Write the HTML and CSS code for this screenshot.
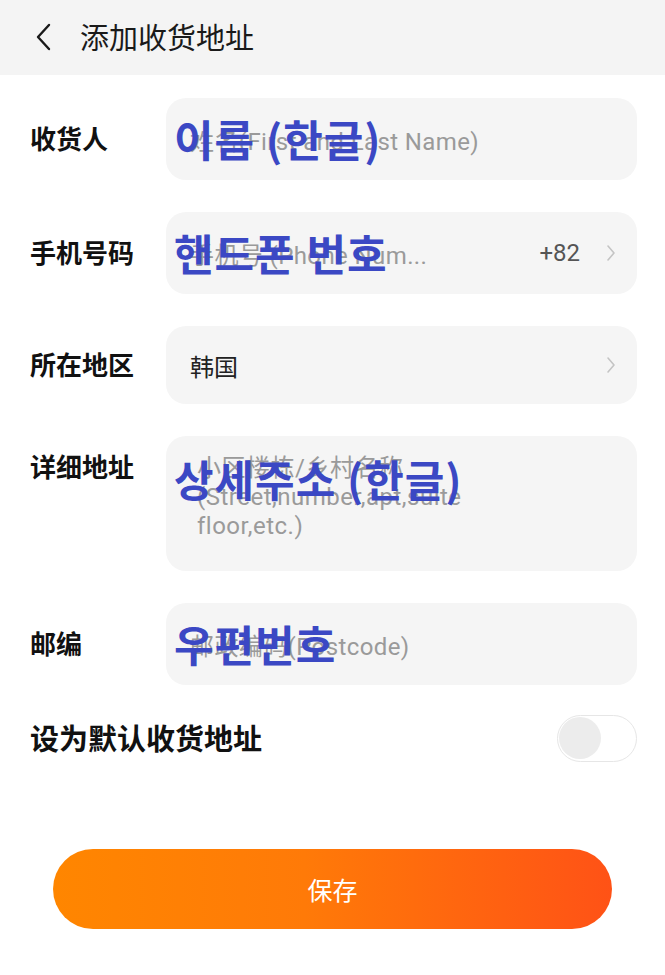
FILE: index.html
```html
<!DOCTYPE html>
<html lang="zh-CN">
<head>
  <meta charset="UTF-8">
  <title>添加收货地址</title>
  <link rel="stylesheet" href="styles.css">
</head>
<body>

  <!-- Header -->
  <div class="header">
    <svg class="back-icon" width="20" height="30" viewBox="0 0 20 30">
      <polyline points="15,3 4,15 15,27" fill="none" stroke="#1a1a1a" stroke-width="2.4" stroke-linecap="round" stroke-linejoin="round"/>
    </svg>
    <div class="header-title">添加收货地址</div>
  </div>

  <!-- Form -->
  <div class="form">
    <div class="row">
      <div class="label">收货人</div>
      <div class="field">
        <span class="placeholder">姓名(First and Last Name)</span>
        <span class="note">이름 (한글)</span>
      </div>
    </div>

    <div class="row">
      <div class="label">手机号码</div>
      <div class="field">
        <span class="placeholder grow">手机号 (Phone Num...</span>
        <span class="code">+82</span>
        <svg class="chevron" width="10" height="18" viewBox="0 0 10 18">
          <polyline points="2,2 8,9 2,16" fill="none" stroke="#c4c4c4" stroke-width="1.6" stroke-linecap="round" stroke-linejoin="round"/>
        </svg>
        <span class="note">핸드폰 번호</span>
      </div>
    </div>

    <div class="row">
      <div class="label">所在地区</div>
      <div class="field field-short">
        <span class="value grow">韩国</span>
        <svg class="chevron" width="10" height="18" viewBox="0 0 10 18">
          <polyline points="2,2 8,9 2,16" fill="none" stroke="#c4c4c4" stroke-width="1.6" stroke-linecap="round" stroke-linejoin="round"/>
        </svg>
      </div>
    </div>

    <div class="row row-top">
      <div class="label">详细地址</div>
      <div class="field field-area">
        <div class="area-text">
          <div>小区楼栋/乡村名称</div>
          <div>(Street,number,apt,suite</div>
          <div>floor,etc.)</div>
        </div>
        <span class="note note-area">상세주소 (한글)</span>
      </div>
    </div>

    <div class="row">
      <div class="label">邮编</div>
      <div class="field">
        <span class="placeholder">邮政编码(Postcode)</span>
        <span class="note">우편번호</span>
      </div>
    </div>

    <div class="switch-row">
      <div class="switch-label">设为默认收货地址</div>
      <div class="switch">
        <div class="knob"></div>
      </div>
    </div>
  </div>

  <div class="footer">
    <button class="save-button">保存</button>
  </div>

</body>
</html>
```

FILE: styles.css
```css
* {
  box-sizing: border-box;
  margin: 0;
  padding: 0;
}

body {
  font-family: Roboto, "Noto Sans CJK SC", sans-serif;
  background: #fff;
  color: #1a1a1a;
}

.header {
  height: 75px;
  background: #f4f4f4;
  display: flex;
  align-items: center;
  padding-left: 34px;
}

.back-icon {
  display: block;
  margin-top: -2px;
}

.header-title {
  margin-left: 26px;
  margin-top: -3px;
  font-size: 29px;
  font-family: "Noto Sans CJK SC", sans-serif;
  color: #1a1a1a;
}

.form {
  padding: 23px 28px 0 30px;
}

.row {
  display: flex;
  align-items: center;
  margin-bottom: 32px;
}

.row-top {
  align-items: flex-start;
}

.label {
  width: 136px;
  flex-shrink: 0;
  margin-top: -4px;
  font-family: "Noto Sans CJK SC", sans-serif;
  font-size: 26px;
  font-weight: bold;
  color: #111;
}

.row-top .label {
  margin-top: 0;
  padding-top: 11px;
}

.field {
  position: relative;
  flex: 1;
  height: 82px;
  background: #f5f5f5;
  border-radius: 20px;
  display: flex;
  align-items: center;
  padding: 0 21px 0 24px;
  font-size: 24px;
}

.field-short {
  height: 78px;
}

.field-area {
  height: 135px;
  align-items: flex-start;
  padding: 18px 21px 0 31px;
}

.grow {
  flex: 1;
}

.placeholder {
  color: #9a9a9a;
  letter-spacing: 0.4px;
}

.value {
  color: #222;
}

.code {
  color: #555;
  margin-right: 26px;
}

.chevron {
  display: block;
}

.area-text {
  width: 273px;
  overflow: hidden;
  white-space: nowrap;
  color: #9a9a9a;
  line-height: 29px;
  letter-spacing: 0.5px;
}

/* blue annotation written over the inputs */
.note {
  position: absolute;
  left: 8px;
  top: 50%;
  transform: translateY(-52%);
  font-family: "Noto Sans CJK KR", sans-serif;
  font-size: 43px;
  font-weight: bold;
  color: #3b48c4;
  white-space: nowrap;
  letter-spacing: 1px;
}

.note-area {
  top: 43px;
}

.switch-row {
  display: flex;
  justify-content: space-between;
  align-items: center;
  margin-top: -2px;
}

.switch-label {
  margin-top: -4px;
  font-family: "Noto Sans CJK SC", sans-serif;
  font-size: 29px;
  font-weight: bold;
  color: #111;
}

.switch {
  width: 80px;
  height: 47px;
  border: 1.5px solid #e6e6e6;
  border-radius: 24px;
  background: #fff;
  padding: 1px;
}

.knob {
  width: 42px;
  height: 42px;
  border-radius: 50%;
  background: #ececec;
}

.footer {
  padding: 87px 53px 0;
}

.save-button {
  width: 100%;
  height: 80px;
  border: none;
  border-radius: 40px;
  background: linear-gradient(90deg, #ff8600 0%, #ff7a08 45%, #ff5216 100%);
  color: #fff;
  font-family: "Noto Sans CJK SC", sans-serif;
  font-size: 25px;
}
```
